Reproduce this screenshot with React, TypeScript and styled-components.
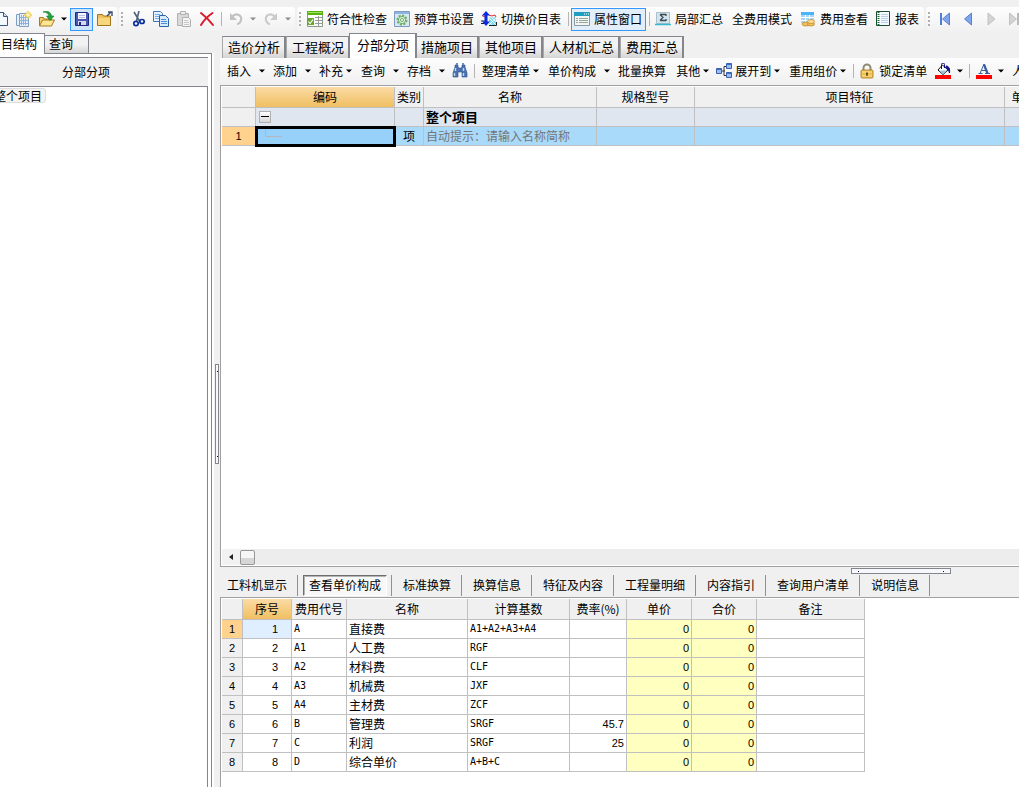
import React, { ReactNode } from "react";
import styled, { createGlobalStyle, css } from "styled-components";

const GlobalStyle = createGlobalStyle`
  *, *::before, *::after { box-sizing: border-box; }
  body {
    margin: 0;
    background: #f0f0f0;
    color: #000;
    font: 12px/16px "Noto Sans CJK SC", "Liberation Sans", sans-serif;
  }
  button, input { font: inherit; color: inherit; }
  svg { display: block; flex: none; }
`;

const Page = styled.div`
  display: flex;
  flex-direction: column;
  height: 100vh;
  overflow: hidden;
`;

/* ---------- toolbars ---------- */

const TopBar = styled.header`
  display: flex;
  gap: 2px;
  padding: 7px 0 2px;
  overflow: hidden;
  flex: none;
`;

const Strip = styled.div<{ $cut?: boolean; $fill?: boolean }>`
  display: flex;
  align-items: center;
  flex: ${(p) => (p.$fill ? "1 0 auto" : "none")};
  height: 24px;
  padding-right: 1px;
  margin-left: ${(p) => (p.$cut ? "-11px" : "0")};
  border-radius: 3px;
  background: linear-gradient(#fefefe, #f1f1f1);
`;

const Grip = styled.span`
  flex: none;
  width: 7px;
  height: 15px;
  background: repeating-linear-gradient(#b0b0b0 0 2px, transparent 2px 4px) 2px 0 / 2px 100% no-repeat;
`;

const Separator = styled.span`
  flex: none;
  width: 6px;
  height: 14px;
  background: linear-gradient(#b4b4b4, #b4b4b4) 3px 0 / 1px 100% no-repeat;
`;

const ToolButton = styled.button<{ $kind: "icon" | "label" | "iconLabel"; $on?: boolean; $menu?: boolean }>`
  display: flex;
  align-items: center;
  justify-content: center;
  flex: none;
  gap: 4px;
  height: 23px;
  border: 1px solid transparent;
  background: none;
  white-space: nowrap;
  ${(p) => p.$kind === "icon" && css`width: 23px; padding: 0;`}
  ${(p) => p.$kind === "label" && css`padding: 0 4px;`}
  ${(p) => p.$kind === "iconLabel" && css`padding: 0 3px 0 2px;`}
  ${(p) => p.$menu && css`gap: 3px; padding-right: 3px;`}
  ${(p) => p.$on && css`border-color: #3399ff; background: #cfe5fa;`}
  ${(p) => p.$on && p.$kind === "iconLabel" && css`background: #e3eefb;`}
`;

const ArrowButton = styled.button`
  display: flex;
  align-items: center;
  justify-content: center;
  flex: none;
  width: 12px;
  height: 23px;
  padding: 0;
  border: 0;
  background: none;
`;

const Caret = ({ off }: { off?: boolean }) => (
  <svg width="6" height="4" viewBox="0 0 6 4" aria-hidden="true">
    <path d="M0 0.5h6L3 3.5z" fill={off ? "#8c8c8c" : "#000"} />
  </svg>
);

const Tool = ({ icon, label, name, on, menu, split, off }: {
  icon?: ReactNode; label?: string; name?: string; on?: boolean; menu?: boolean; split?: boolean; off?: boolean;
}) => {
  const kind = icon && label ? "iconLabel" : label ? "label" : "icon";
  return (
    <>
      <ToolButton type="button" $kind={kind} $on={on} $menu={menu} aria-label={name ?? label} aria-pressed={on} disabled={off}>
        {icon}
        {label}
        {menu && <Caret />}
      </ToolButton>
      {split && (
        <ArrowButton type="button" aria-label={`${name ?? label} 更多`} disabled={off}>
          <Caret off={off} />
        </ArrowButton>
      )}
    </>
  );
};

/* ---------- icons ---------- */

const Svg = ({ children }: { children: ReactNode }) => (
  <svg width="16" height="16" viewBox="0 0 16 16" aria-hidden="true">{children}</svg>
);

const NewDocIcon = () => (
  <Svg>
    <path d="M2.5 1.5h8l4 4v9h-12z" fill="#f4f9fe" stroke="#345a84" />
    <path d="M10.500 1.5v4h4" fill="#cfe0f0" stroke="#345a84" />
  </Svg>
);
const NewProjectIcon = () => (
  <Svg>
    <path d="M0.5 3.5h3v11h-3zM3.500 2.500h9v13h-9z" fill="#e4effa" stroke="#7f9fc0" />
    <path d="M5.500 4v10M7.500 4v10M9.500 4v10M4 6.500h8M4 9.500h8M4 12.500h8" stroke="#8fb2d6" />
    <path d="M12 0v8M8 4h8M9.500 1.500l5 5M14.500 1.500l-5 5" stroke="#f3cd4a" strokeWidth="1.300" />
    <circle cx="12" cy="4" r="1.800" fill="#fff6c0" />
  </Svg>
);
const OpenIcon = () => (
  <Svg>
    <path d="M0.5 14.500V6.500h4l1 1.500h7v2" fill="#f3d070" stroke="#a87a1c" />
    <path d="M0.5 15l3-6h12l-3 6z" fill="#ffe594" stroke="#a87a1c" />
    <path d="M4 1c4-2 8 0 8.500 4h2.500l-4 4.500L7.500 5H10C9.500 2.500 7 1 4 1z" fill="#22a43c" stroke="#0e7a2a" strokeWidth=".6" />
  </Svg>
);
const SaveIcon = () => (
  <Svg>
    <path d="M1.500 1.500h12l1 1v12h-13z" fill="#4a58b4" stroke="#1d2a80" />
    <path d="M4 2h8v6H4z" fill="#f4f6fd" />
    <path d="M5 4.500h6M5 6.500h6" stroke="#b7bfe2" />
    <path d="M4 10h8v4H4z" fill="#d5daee" />
    <path d="M5 11h2v3H5z" fill="#1d2a80" />
  </Svg>
);
const FolderOutIcon = () => (
  <Svg>
    <path d="M0.500 14.500v-11h5l1 1.500h7v9.500z" fill="#efc25c" stroke="#a0741c" />
    <path d="M1 7h12v7H1z" fill="#f8d67c" />
    <path d="M10 5l4-4M11 1h4v4" fill="none" stroke="#3b4a6b" strokeWidth="1.400" />
  </Svg>
);
const CutIcon = () => (
  <Svg>
    <path d="M4 1l5.500 9M9 0L6.500 10" stroke="#50627a" strokeWidth="1.600" fill="none" />
    <ellipse cx="6" cy="12.500" rx="2.200" ry="2.200" fill="none" stroke="#0b2f9c" strokeWidth="1.700" />
    <ellipse cx="12" cy="10.500" rx="2.200" ry="2" fill="none" stroke="#0b2f9c" strokeWidth="1.700" />
  </Svg>
);
const CopyIcon = () => (
  <Svg>
    <path d="M0.500 0.500h7l2 2v8h-9z" fill="#e5f1fd" stroke="#3f78bd" />
    <path d="M2 3.500h5M2 5.500h6M2 7.500h4" stroke="#79aee4" />
    <path d="M6.500 4.500h6l3 3v8h-9z" fill="#d7e9fc" stroke="#2c62a8" />
    <path d="M8 8.500h5M8 10.500h6M8 12.500h6" stroke="#4d8ed4" />
  </Svg>
);
const PasteIcon = () => (
  <Svg>
    <path d="M1.500 2.500h11v12h-11z" fill="#d9d9d9" stroke="#b0b0b0" />
    <path d="M4.500 0.500h5v3h-5z" fill="#eee" stroke="#b0b0b0" />
    <path d="M6.500 6.500h6l2 2v7h-8z" fill="#f5f5f5" stroke="#b0b0b0" />
    <path d="M8 9.500h4M8 11.500h5M8 13.500h5" stroke="#c9c9c9" />
  </Svg>
);
const DeleteIcon = () => (
  <Svg><path d="M2 2c4 3 8 7 12 12M13.500 2C9 5 5 9 2 14" stroke="#dc1b2b" strokeWidth="2" fill="none" strokeLinecap="round" /></Svg>
);
const UndoIcon = () => (
  <Svg>
    <path d="M4 6c4-5 10-2 9 3-.5 2-2 4-4 4" fill="none" stroke="#c2c2c2" strokeWidth="2.200" />
    <path d="M2 2v7h7z" fill="#c2c2c2" />
  </Svg>
);
const RedoIcon = () => (
  <Svg>
    <path d="M12 6C8 1 2 4 3 9c.5 2 2 4 4 4" fill="none" stroke="#cbcbcb" strokeWidth="2.200" />
    <path d="M14 2v7H7z" fill="#cbcbcb" />
  </Svg>
);
const CheckTableIcon = () => (
  <Svg>
    <path d="M0.500 0.500h15v15h-15z" fill="#fff" stroke="#8a9a8a" />
    <path d="M0 0h16v4H0z" fill="#58b411" />
    <path d="M1 1h14v1H1z" fill="#a4de5c" />
    <path d="M0 7h7v7H0z" fill="#6aa530" />
    <path d="M1.500 10.500l1.500 2 3-4" stroke="#fff" fill="none" strokeWidth="1.200" />
    <path d="M8 6.500h7M8 9.500h7M8 12.500h7M11.500 5v10" stroke="#9a9a9a" />
  </Svg>
);
const GearPageIcon = () => (
  <Svg>
    <path d="M0.500 0.500h15v15h-15z" fill="#d9e7f5" stroke="#7d9cc4" />
    <path d="M1 1h14v2H1z" fill="#8fb4e0" />
    <circle cx="8" cy="9" r="4.700" fill="#e2f3df" stroke="#6aac6a" strokeWidth="1.600" strokeDasharray="2.200 1.400" />
    <circle cx="8" cy="9" r="3.600" fill="none" stroke="#6aac6a" />
    <circle cx="8" cy="9" r="1.500" fill="#fff" stroke="#6aac6a" />
  </Svg>
);
const SwitchIcon = () => (
  <Svg>
    <path d="M8 6.500h5l2-1v9H8z" fill="#7fdcec" />
    <path d="M8 7l7 7M8 11l3 3M11 7l4 4M15 7l-7 7" stroke="#fff" strokeWidth=".8" />
    <path d="M0 10h4M0 12.500h4M8 14.500h7.500V11" stroke="#222" fill="none" />
    <path d="M1 4.500L4 6M8 4l3 1 3-1 1 2" stroke="#e03030" fill="none" />
    <path d="M5 0l4 4.500H6.500v6H9L5 15 1 10.500h2.500v-6H1z" fill="#0a2be0" />
  </Svg>
);
const WindowIcon = () => (
  <Svg>
    <path d="M0.500 1.500h15v13h-15z" fill="#f3f5f2" stroke="#8a98a0" />
    <path d="M0 1h16v4H0z" fill="#1f9fc0" />
    <path d="M10 3h1M12 3h1M14 3h1" stroke="#fff" />
    <path d="M2 7.500h2M2 9.500h2M2 11.500h2M5 7.500h9M5 9.500h9M5 11.500h9" stroke="#93a79a" />
  </Svg>
);
const SumIcon = () => (
  <Svg>
    <path d="M1.500 1.500h13v11h-13z" fill="#d3e6ee" stroke="#a9c0ca" />
    <path d="M5 3.500h6M5 9.500h6M5 3.500l3 3-3 3M11 3v2M11 8v2" stroke="#3c4a52" strokeWidth="1.300" fill="none" />
    <path d="M0 13.500h16" stroke="#39b9cf" strokeWidth="1.500" />
  </Svg>
);
const FeeIcon = () => (
  <Svg>
    <path d="M1 1h13v11H1z" fill="#a6d6f8" />
    <path d="M1 1h13v3H1z" fill="#4cb4f4" />
    <path d="M1 6.500h13M1 9.500h13M5.500 4v8M9.500 4v8" stroke="#fff" />
    <ellipse cx="6" cy="13" rx="4" ry="2" fill="#f0bf5c" stroke="#b98427" strokeWidth=".7" />
    <ellipse cx="11" cy="13" rx="3.500" ry="2" fill="#f0bf5c" stroke="#b98427" strokeWidth=".7" />
    <ellipse cx="11" cy="10.500" rx="3.500" ry="2" fill="#fbdc92" stroke="#b98427" strokeWidth=".7" />
  </Svg>
);
const ReportIcon = () => (
  <Svg>
    <path d="M1.500 0.500h13v14h-13z" fill="#f4faff" stroke="#1d4f2c" />
    <path d="M3.500 1v13" stroke="#1d6b35" strokeDasharray="1 1" strokeWidth="2" />
    <path d="M6 3.500h7M6 5.500h7M6 7.500h7M6 9.500h7M6 11.500h7" stroke="#b9cfe3" />
  </Svg>
);
const NavIcon = ({ back, bar, off }: { back?: boolean; bar?: boolean; off?: boolean }) => (
  <Svg>
    <path
      d={back ? (bar ? "M12.500 2v12L5.500 8z" : "M11.500 2v12L4.500 8z") : bar ? "M3.500 2v12L10.500 8z" : "M5 2v12l7-6z"}
      fill={off ? "#d4d4d4" : "#7fa6ec"} stroke={off ? "#b9b9b9" : "#3f70cc"} strokeWidth=".8"
    />
    {bar && <path d={back ? "M4 2v12" : "M12 2v12"} stroke={off ? "#b9b9b9" : "#4d7ed8"} strokeWidth="2" />}
  </Svg>
);
const BinocularsIcon = () => (
  <Svg>
    <path d="M3 2h3v2l1 1h2l1-1V2h3v2l2 6v4h-5v-5H6v5H1v-4l2-6z" fill="#4a72b0" stroke="#2b4f8a" strokeWidth=".6" />
    <path d="M3.500 5v3M2.500 10v3M11.500 5v3M11.500 10v3" stroke="#c4d8f2" strokeWidth="1.400" />
    <path d="M4 1h2M10 1h2" stroke="#6f8fc2" strokeWidth="2" />
  </Svg>
);
const ExpandIcon = () => (
  <Svg>
    <path d="M5 8h4M8 3.500v9M8 3.500h3M8 12.500h3" stroke="#333" fill="none" />
    <path d="M.5 5.500h5v5h-5zM10.500 .5h5v5h-5zM10.500 9.500h5v5h-5z" fill="#9dbdf0" stroke="#3a62b0" />
    <path d="M1 6h4v1H1zM11 1h4v1h-4zM11 10h4v1h-4z" fill="#3f6fc4" />
  </Svg>
);
const LockIcon = () => (
  <Svg>
    <path d="M4.500 8V5a3.500 3.500 0 017 0v3" fill="none" stroke="#8d8d76" strokeWidth="2" />
    <rect x="2" y="7" width="12" height="8" rx="1" fill="#f0bf4c" stroke="#a5761a" strokeWidth=".8" />
    <path d="M3 9h10M3 13h10" stroke="#fbe3a0" />
    <path d="M8 9.500v3.500M7 10.500h2" stroke="#5f4410" strokeWidth="1.400" />
  </Svg>
);
const FillIcon = () => (
  <Svg>
    <path d="M7.500 2L13 7l-5 4.500L3 7z" fill="#fff" stroke="#111" />
    <path d="M4 7.500h8L8 11z" fill="#9fc4de" />
    <path d="M6.500 6V1.500a1.500 1.500 0 013 0V5" fill="none" stroke="#101080" />
    <path d="M11 3c3 0 4 3 3.500 7l-1-3-2-2z" fill="#101080" stroke="#101080" />
    <path d="M0 12h16v4H0z" fill="#f00" />
  </Svg>
);
const FontColorIcon = () => (
  <Svg>
    <path d="M2.500 10.500h4M9 10.500h5M4 10.500L8 1l4 9.500M5.500 7.500h5" fill="none" stroke="#3a5f9c" strokeWidth="1" />
    <path d="M8 1.500l3.500 9" stroke="#3a5f9c" strokeWidth="2.200" />
    <path d="M0 12h16v4H0z" fill="#f00" />
  </Svg>
);

/* ---------- body layout ---------- */

const Body = styled.main`
  display: flex;
  flex: 1;
  min-height: 0;
`;

const SidePane = styled.aside`
  display: flex;
  flex-direction: column;
  flex: none;
  width: 214px;
`;

const SideTabs = styled.div`
  display: flex;
  align-items: flex-end;
  height: 20px;
`;

const SideTab = styled.button<{ $on?: boolean }>`
  position: relative;
  flex: none;
  width: ${(p) => (p.$on ? "45px" : "44px")};
  height: ${(p) => (p.$on ? "21px" : "18px")};
  margin-bottom: ${(p) => (p.$on ? "-1px" : "0")};
  padding: 0 0 1px ${(p) => (p.$on ? "1px" : "4px")};
  border: solid #84868e;
  border-width: 1px 1px 0 0;
  background: ${(p) => (p.$on ? "#fff" : "linear-gradient(#f2f2f2 50%, #d6d6d6)")};
  z-index: ${(p) => (p.$on ? 1 : 0)};
  text-align: left;
  white-space: nowrap;
`;

const SidePanel = styled.div`
  flex: 1;
  display: flex;
  flex-direction: column;
  width: 212px;
  padding: 3px 3px 0 0;
  border: solid #84868e;
  border-width: 1px 1px 0 0;
  background: #fff;
  box-shadow: 2px 0 #fff;
`;

const SideTitle = styled.h2`
  margin: 0;
  height: 29px;
  padding-right: 36px;
  border-top: 1px solid #84868e;
  background: #f0f0f0;
  font: inherit;
  line-height: 28px;
  text-align: center;
`;

const Tree = styled.ul`
  flex: 1;
  margin: 0;
  padding: 1px 0 0;
  border: solid #84868e;
  border-width: 1px 1px 0 0;
  overflow: hidden;
  list-style: none;
`;

const TreeItem = styled.button`
  display: block;
  height: 15px;
  margin-left: -10px;
  padding: 0 3px;
  border: 1px solid #ddd;
  border-radius: 3px;
  background: #f3f3f3;
  line-height: 13px;
`;

const Splitter = styled.div`
  display: flex;
  align-items: center;
  justify-content: center;
  flex: none;
  width: 6px;
  padding-top: 8px;
`;

const Handle = styled.span<{ $wide?: boolean }>`
  position: relative;
  display: flex;
  flex-direction: ${(p) => (p.$wide ? "row" : "column")};
  justify-content: space-between;
  width: ${(p) => (p.$wide ? "100px" : "4px")};
  height: ${(p) => (p.$wide ? "6px" : "100px")};
  padding: ${(p) => (p.$wide ? "2px 6px" : "6px 0 6px 1px")};
  border: 1px solid #84868e;
  background: #f8f8fc;
  &::before, &::after { content: ""; width: 1px; height: 1px; background: #000060; }
`;

const HandleSpot = styled.div`
  position: absolute;
  top: 1px;
  left: 79%;
`;

const Work = styled.section`
  display: flex;
  flex-direction: column;
  flex: 1;
  min-width: 0;
`;

const ViewTabs = styled.div`
  display: flex;
  align-items: flex-end;
  flex: none;
  height: 25px;
  padding-left: 2px;
  overflow: hidden;
`;

const ViewTab = styled.button<{ $on?: boolean }>`
  position: relative;
  flex: none;
  height: ${(p) => (p.$on ? "25px" : "22px")};
  margin: ${(p) => (p.$on ? "0 -2px 0 -1px" : "0")};
  padding: ${(p) => (p.$on ? "0 6px 3px 7px" : "0 4px 2px 5px")};
  border: solid #84868e;
  border-width: 1px 2px 0 1px;
  border-left-color: ${(p) => (p.$on ? "#84868e" : "#a8a8a8")};
  background: ${(p) => (p.$on ? "#fff" : "linear-gradient(#f3f3f3 45%, #d4d4d4)")};
  z-index: ${(p) => (p.$on ? 1 : 0)};
  font-size: 13px;
  white-space: nowrap;
`;

const GridBar = styled.div`
  display: flex;
  align-items: center;
  flex: none;
  height: 27px;
  padding: 0 0 1px 2px;
  background: linear-gradient(#fdfdfd, #f0f0f0);
  overflow: hidden;
`;

const MainGrid = styled.div`
  display: flex;
  flex-direction: column;
  flex: 1;
  min-height: 0;
  padding: 1px 0 1px 1px;
  border: solid #a0a0a0;
  border-width: 1px 0 1px 1px;
  background: #fff;
`;

const GridView = styled.div`
  flex: 1;
  min-height: 0;
  overflow: hidden;
`;

const ScrollRow = styled.div`
  display: flex;
  align-items: center;
  flex: none;
  height: 16px;
  background: #ededed;
`;

const ScrollButton = styled.button`
  display: grid;
  place-items: center;
  width: 18px;
  height: 16px;
  padding: 0;
  border: 0;
  background: #f2f2f2;
`;

const ScrollThumb = styled.span`
  width: 15px;
  height: 15px;
  border: 1px solid #979797;
  border-radius: 2px;
  background: linear-gradient(#f6f6f6 50%, #d6d6d6 50%);
`;

const Table = styled.table<{ $w: number }>`
  width: ${(p) => p.$w}px;
  table-layout: fixed;
  border-spacing: 0;
  border-collapse: separate;
`;

const cell = css`
  height: 19px;
  padding: 0 2px;
  border: solid #c0c0c0;
  border-width: 0 1px 1px 0;
  line-height: 16px;
  font-weight: normal;
  white-space: nowrap;
  overflow: hidden;
`;

const Head = styled.th<{ $on?: boolean }>`
  ${cell}
  height: 21px;
  padding: 0;
  text-align: center;
  background: ${(p) => (p.$on ? "linear-gradient(#fbdba5, #f0bf62)" : "#f0f0f0")};
`;

const RowHead = styled.th<{ $on?: boolean }>`
  ${cell}
  padding: 0;
  font-family: "Liberation Sans", sans-serif;
  font-size: 11px;
  text-align: center;
  background: ${(p) => (p.$on ? "#ffd38e" : "#f0f0f0")};
`;

const Cell = styled.td<{ $bg?: string; $num?: boolean; $code?: boolean; $indent?: boolean }>`
  ${cell}
  background: ${(p) => p.$bg ?? "#fff"};
  ${(p) => p.$num && css`font: 11px/16px "Liberation Sans", sans-serif; text-align: right;`}
  ${(p) => p.$code && css`font: 10px/16px "DejaVu Sans Mono", monospace;`}
  ${(p) => p.$indent && css`padding-right: 13px;`}
`;

const GroupName = styled(Cell)`
  font-size: 13px;
  font-weight: bold;
`;

const TypeCell = styled(Cell)`
  text-align: center;
`;

const FocusCell = styled(Cell)`
  position: relative;
  padding-left: 8px;
  outline: 3px solid #000;
  outline-offset: -2px;
`;

const NodeCell = styled(Cell)`
  padding-left: 3px;
`;

const NodeButton = styled.button`
  display: grid;
  place-items: center;
  width: 12px;
  height: 12px;
  padding: 0;
  border: 1px solid #b0b0b0;
  background: linear-gradient(#fff, #d8d8d8);
`;

const NameInput = styled.input`
  display: block;
  width: 100%;
  height: 16px;
  padding: 0;
  border: 0;
  outline: 0;
  background: none;
  &::placeholder { color: #767676; opacity: 1; }
`;

const DetailTabs = styled.div`
  position: relative;
  flex: none;
  height: 30px;
`;

const DetailList = styled.div`
  display: flex;
  align-items: center;
  height: 30px;
  margin-left: -3px;
  padding-top: 6px;
  overflow: hidden;
`;

const DetailItem = styled.div`
  flex: none;
  padding: 0 4px;
  border-right: 1px solid #909090;
  margin-right: 1px;
`;

const DetailTab = styled.button<{ $on?: boolean }>`
  display: block;
  height: 21px;
  padding: 0 5px;
  border: 1px solid transparent;
  background: none;
  white-space: nowrap;
  ${(p) => p.$on && css`
    border-color: #6e6e6e #fff #fff #6e6e6e;
    background: #f8f8f8;
    box-shadow: inset 1px 1px #b4b4b4;
  `}
`;

const DetailGrid = styled.div`
  flex: none;
  height: 190px;
  padding: 1px 0 0 1px;
  border: solid #a0a0a0;
  border-width: 1px 0 0 1px;
  background: #fff;
  overflow: hidden;
`;

const views = ["造价分析", "工程概况", "分部分项", "措施项目", "其他项目", "人材机汇总", "费用汇总"];
const details = ["工料机显示", "查看单价构成", "标准换算", "换算信息", "特征及内容", "工程量明细", "内容指引", "查询用户清单", "说明信息"];
const mainCols = [34, 139, 29, 173, 98, 310, 38];
const mainHeads = ["", "编码", "类别", "名称", "规格型号", "项目特征", "单位"];
const feeCols = [21, 49, 55, 121, 102, 57, 65, 65, 108];
const feeHeads = ["", "序号", "费用代号", "名称", "计算基数", "费率(%)", "单价", "合价", "备注"];
const fees = [
  ["A", "直接费", "A1+A2+A3+A4", ""],
  ["A1", "人工费", "RGF", ""],
  ["A2", "材料费", "CLF", ""],
  ["A3", "机械费", "JXF", ""],
  ["A4", "主材费", "ZCF", ""],
  ["B", "管理费", "SRGF", "45.7"],
  ["C", "利润", "SRGF", "25"],
  ["D", "综合单价", "A+B+C", ""],
];

const total = (widths: number[]) => widths.reduce((a, b) => a + b, 0);
const Columns = ({ widths }: { widths: number[] }) => (
  <colgroup>{widths.map((w, i) => <col key={i} width={w} />)}</colgroup>
);

const GROUP = "#dfe6f0";
const ACTIVE = "#a9dafa";
const PRICE = "#ffffc0";

export default function App() {
  return (
    <Page>
      <GlobalStyle />
      <TopBar>
        <Strip $cut>
          <Tool icon={<NewDocIcon />} name="新建" />
          <Tool icon={<NewProjectIcon />} name="新建项目" />
          <Tool icon={<OpenIcon />} name="打开" split />
          <Tool icon={<SaveIcon />} name="保存" on />
          <Tool icon={<FolderOutIcon />} name="另存" />
        </Strip>
        <Strip>
          <Grip />
          <Tool icon={<CutIcon />} name="剪切" />
          <Tool icon={<CopyIcon />} name="复制" />
          <Tool icon={<PasteIcon />} name="粘贴" off />
          <Tool icon={<DeleteIcon />} name="删除" />
          <Separator />
          <Tool icon={<UndoIcon />} name="撤销" split off />
          <Tool icon={<RedoIcon />} name="恢复" split off />
        </Strip>
        <Strip>
          <Grip />
          <Tool icon={<CheckTableIcon />} label="符合性检查" />
          <Tool icon={<GearPageIcon />} label="预算书设置" />
          <Tool icon={<SwitchIcon />} label="切换价目表" />
          <Separator />
          <Tool icon={<WindowIcon />} label="属性窗口" on />
          <Separator />
          <Tool icon={<SumIcon />} label="局部汇总" />
          <Tool label="全费用模式" />
          <Tool icon={<FeeIcon />} label="费用查看" />
          <Tool icon={<ReportIcon />} label="报表" />
        </Strip>
        <Strip $fill>
          <Grip />
          <Tool icon={<NavIcon back bar />} name="首行" />
          <Tool icon={<NavIcon back />} name="上一行" />
          <Tool icon={<NavIcon off />} name="下一行" off />
          <Tool icon={<NavIcon bar off />} name="末行" off />
        </Strip>
      </TopBar>
      <Body>
        <SidePane>
          <SideTabs role="tablist">
            <SideTab type="button" role="tab" aria-selected $on>目结构</SideTab>
            <SideTab type="button" role="tab" aria-selected={false}>查询</SideTab>
          </SideTabs>
          <SidePanel>
            <SideTitle>分部分项</SideTitle>
            <Tree>
              <li><TreeItem type="button">整个项目</TreeItem></li>
            </Tree>
          </SidePanel>
        </SidePane>
        <Splitter><Handle /></Splitter>
        <Work>
          <ViewTabs role="tablist">
            {views.map((v, i) => (
              <ViewTab key={v} type="button" role="tab" aria-selected={i === 2} $on={i === 2}>{v}</ViewTab>
            ))}
          </ViewTabs>
          <GridBar role="toolbar">
            <Tool label="插入" split />
            <Tool label="添加" split />
            <Tool label="补充" menu />
            <Tool label="查询" split />
            <Tool label="存档" split />
            <Tool icon={<BinocularsIcon />} name="查找" />
            <Separator />
            <Tool label="整理清单" menu />
            <Tool label="单价构成" split />
            <Tool label="批量换算" />
            <Tool label="其他" menu />
            <Tool icon={<ExpandIcon />} label="展开到" menu />
            <Tool label="重用组价" menu />
            <Separator />
            <Tool icon={<LockIcon />} label="锁定清单" />
            <Tool icon={<FillIcon />} name="填充颜色" split />
            <Separator />
            <Tool icon={<FontColorIcon />} name="字体颜色" split />
            <Tool label="人" />
          </GridBar>
          <MainGrid>
            <GridView>
              <Table $w={total(mainCols)}>
                <Columns widths={mainCols} />
                <thead>
                  <tr>{mainHeads.map((h, i) => <Head key={i} scope="col" $on={i === 1}>{h}</Head>)}</tr>
                </thead>
                <tbody>
                  <tr>
                    <RowHead scope="row" />
                    <NodeCell $bg={GROUP}>
                      <NodeButton type="button" aria-label="折叠">
                        <svg width="8" height="2" aria-hidden="true"><path d="M0 0h8v1H0z" /></svg>
                      </NodeButton>
                    </NodeCell>
                    <Cell $bg={GROUP} />
                    <GroupName $bg={GROUP}>整个项目</GroupName>
                    <Cell $bg={GROUP} />
                    <Cell $bg={GROUP} />
                    <Cell $bg={GROUP} />
                  </tr>
                  <tr>
                    <RowHead scope="row" $on>1</RowHead>
                    <FocusCell $bg="#97d0f9">
                      <svg width="18" height="16" aria-hidden="true"><path d="M1.500 0v8.500H18" fill="none" stroke="#b4b8bc" /></svg>
                    </FocusCell>
                    <TypeCell $bg={ACTIVE}>项</TypeCell>
                    <Cell $bg={ACTIVE}><NameInput aria-label="名称" placeholder="自动提示：请输入名称简称" /></Cell>
                    <Cell $bg={ACTIVE} />
                    <Cell $bg={ACTIVE} />
                    <Cell $bg={ACTIVE} />
                  </tr>
                </tbody>
              </Table>
            </GridView>
            <ScrollRow>
              <ScrollButton type="button" aria-label="向左滚动">
                <svg width="4" height="6" aria-hidden="true"><path d="M4 0v6L0 3z" fill="#222" /></svg>
              </ScrollButton>
              <ScrollThumb />
            </ScrollRow>
          </MainGrid>
          <DetailTabs>
            <DetailList role="tablist">
              {details.map((d, i) => (
                <DetailItem key={d}>
                  <DetailTab type="button" role="tab" aria-selected={i === 1} $on={i === 1}>{d}</DetailTab>
                </DetailItem>
              ))}
            </DetailList>
            <HandleSpot><Handle $wide /></HandleSpot>
          </DetailTabs>
          <DetailGrid>
            <Table $w={total(feeCols)}>
              <Columns widths={feeCols} />
              <thead>
                <tr>{feeHeads.map((h, i) => <Head key={i} scope="col" $on={i === 1}>{h}</Head>)}</tr>
              </thead>
              <tbody>
                {fees.map(([code, name, base, rate], i) => (
                  <tr key={code}>
                    <RowHead scope="row" $on={i === 0}>{i + 1}</RowHead>
                    <Cell $num $indent $bg={i === 0 ? "#e0efff" : undefined}>{i + 1}</Cell>
                    <Cell $code>{code}</Cell>
                    <Cell>{name}</Cell>
                    <Cell $code>{base}</Cell>
                    <Cell $num>{rate}</Cell>
                    <Cell $num $bg={PRICE}>0</Cell>
                    <Cell $num $bg={PRICE}>0</Cell>
                    <Cell />
                  </tr>
                ))}
              </tbody>
            </Table>
          </DetailGrid>
        </Work>
      </Body>
    </Page>
  );
}
